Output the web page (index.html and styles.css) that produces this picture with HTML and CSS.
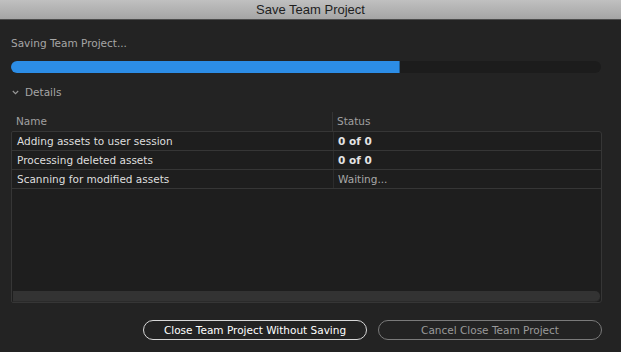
FILE: index.html
```html
<!DOCTYPE html>
<html lang="en">
<head>
    <meta charset="UTF-8">
    <title>Save Team Project</title>
    <link rel="stylesheet" href="styles.css">
</head>
<body>
    <div class="dialog">
        <div class="titlebar">Save Team Project</div>
        <div class="content">
            <div class="status-line">Saving Team Project...</div>
            <div class="progress">
                <div class="fill" style="width: 66%"></div>
            </div>
            <div class="details-toggle">
                <svg class="chevron" width="7" height="5" viewBox="0 0 7 5"><path d="M0.8 1 L3.5 3.7 L6.2 1" fill="none" stroke="#9a9a9a" stroke-width="1.1"/></svg>
                <span>Details</span>
            </div>
            <div class="table">
                <div class="thead">
                    <div class="col name">Name</div>
                    <div class="col status">Status</div>
                </div>
                <div class="tbody">
                    <div class="row">
                        <div class="col name">Adding assets to user session</div>
                        <div class="col status count">0 of 0</div>
                    </div>
                    <div class="row">
                        <div class="col name">Processing deleted assets</div>
                        <div class="col status count">0 of 0</div>
                    </div>
                    <div class="row">
                        <div class="col name">Scanning for modified assets</div>
                        <div class="col status waiting">Waiting...</div>
                    </div>
                    <div class="filler"></div>
                    <div class="scrollbar"><div class="thumb"></div></div>
                </div>
            </div>
            <div class="buttons">
                <div class="button primary">Close Team Project Without Saving</div>
                <div class="button disabled">Cancel Close Team Project</div>
            </div>
        </div>
    </div>
</body>
</html>
```

FILE: styles.css
```css
html, body{
    margin: 0;
    padding: 0;
    background: #232323;
    font-family: "DejaVu Sans", Verdana, sans-serif;
}
.dialog{
    width: 621px;
    height: 352px;
    overflow: hidden;
    display: flex;
    flex-direction: column;
    background: #232323;
}
.titlebar{
    height: 19px;
    line-height: 19px;
    text-align: center;
    font-family: "Liberation Sans", Arial, sans-serif;
    font-size: 13px;
    color: #1e1e1e;
    background: linear-gradient(#c0c0c0, #a5a5a5);
    border-bottom: 1px solid #4c4c4c;
}
.content{
    padding: 0 11px 0 11px;
    display: flex;
    flex-direction: column;
}
.status-line{
    margin-top: 16px;
    font-size: 10.5px;
    line-height: 14px;
    color: #a6a6a6;
}
.progress{
    margin-top: 11px;
    margin-right: 9px;
    height: 12px;
    border-radius: 6px;
    background: #1c1c1c;
    overflow: hidden;
}
.progress .fill{
    height: 100%;
    background: #2c8de6;
    border-right: 1px solid #1f5f99;
    box-sizing: border-box;
}
.details-toggle{
    margin-top: 12px;
    display: flex;
    align-items: center;
    height: 14px;
    font-size: 10.5px;
    color: #a6a6a6;
}
.details-toggle .chevron{
    margin-left: 1px;
    margin-right: 6px;
}
.table{
    margin-top: 13px;
    margin-right: 8px;
    display: flex;
    flex-direction: column;
}
.thead{
    display: flex;
    height: 19px;
    font-size: 10.5px;
    color: #a0a0a0;
}
.thead .col{
    line-height: 19px;
}
.thead .status{
    border-left: 1px solid #343434;
}
.col.name{
    width: 316px;
    padding-left: 5px;
}
.col.status{
    flex: 1;
    padding-left: 4px;
}
.tbody{
    height: 170px;
    border: 1px solid #363636;
    border-radius: 2px 3px 3px 2px;
    background: #1e1e1e;
    display: flex;
    flex-direction: column;
}
.row{
    display: flex;
    height: 18px;
    line-height: 18px;
    border-bottom: 1px solid #363636;
    font-size: 10.5px;
    color: #dedede;
}
.row .status{
    border-left: 1px solid #2c2c2c;
}
.row .count{
    color: #e4e4e4;
    font-weight: bold;
}
.row .waiting{
    color: #a8a8a8;
}
.filler{
    flex: 1;
}
.scrollbar{
    height: 11px;
    padding: 0 1px 0 1px;
}
.scrollbar .thumb{
    height: 10px;
    background: #333333;
    border-bottom: 1px solid #2a2a2a;
    border-radius: 0 5px 5px 0;
}
.buttons{
    margin-top: 17px;
    display: flex;
    justify-content: flex-end;
    gap: 11px;
    padding-right: 8px;
}
.button{
    height: 18px;
    line-height: 18px;
    border-radius: 10px;
    text-align: center;
    font-size: 10.5px;
    user-select: none;
    cursor: pointer;
}
.button.primary{
    width: 222px;
    border: 1px solid #d8d8d8;
    color: #ffffff;
}
.button.disabled{
    width: 222px;
    border: 1px solid #7a7a7a;
    color: #9a9a9a;
}
```
